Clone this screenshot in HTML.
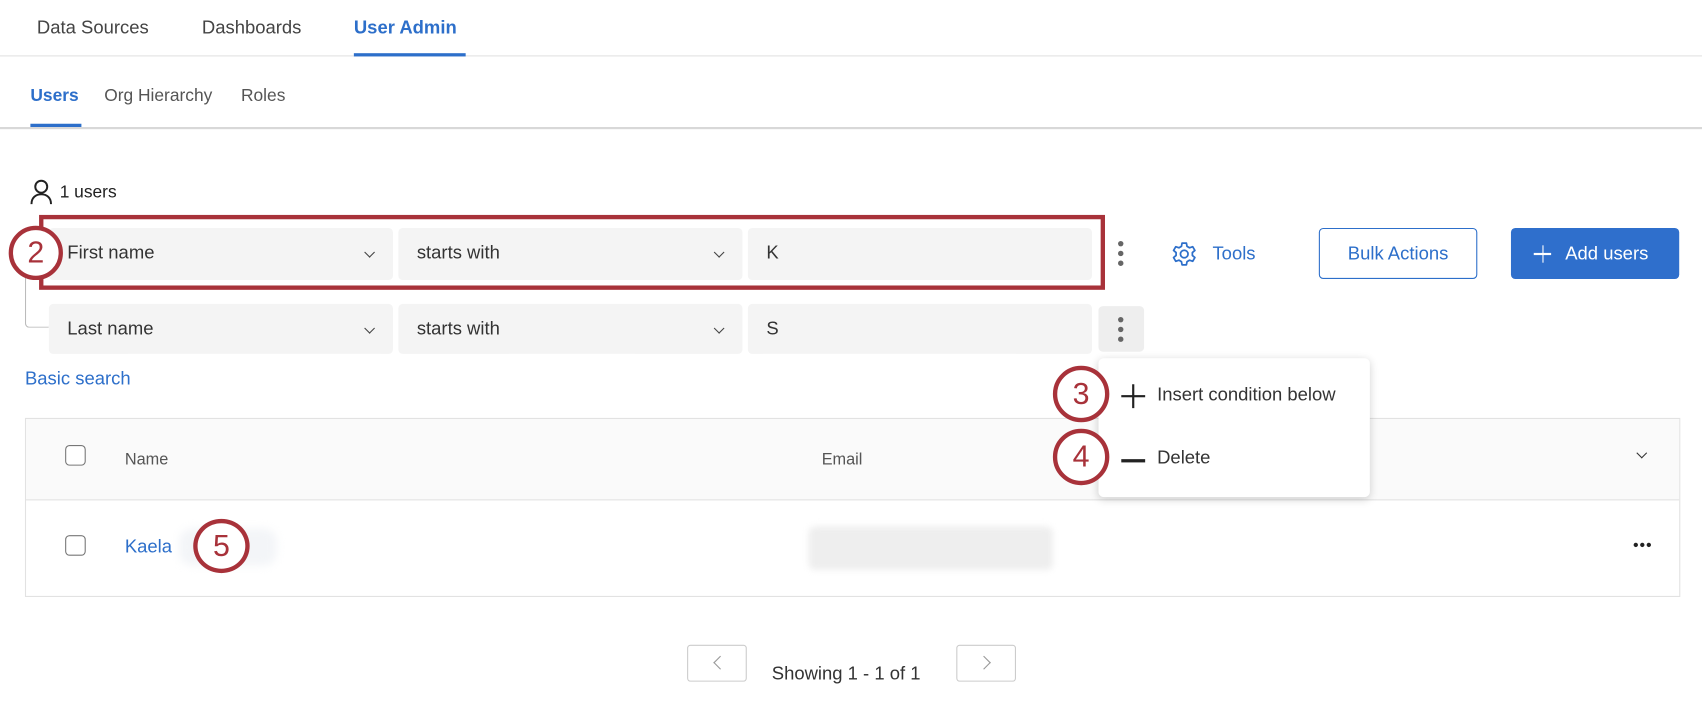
<!DOCTYPE html>
<html><head><meta charset="utf-8"><style>
*{box-sizing:border-box;margin:0;padding:0}
body{width:1702px;height:716px;overflow:hidden;background:#fff;font-family:"Liberation Sans",sans-serif;color:#333}
#w{position:absolute;left:0;top:0;width:1568px;height:660px;transform:scale(1.08546);transform-origin:0 0}
.a{position:absolute}
.t{font-size:17px;white-space:nowrap}
.sel{position:absolute;background:#f4f4f4;border-radius:4px;font-size:17px;color:#333;padding:13px 0 0 17px}
.chev{position:absolute;right:18px;top:19px;width:7px;height:7px;border-right:1.4px solid #444;border-bottom:1.4px solid #444;transform:rotate(45deg)}
.circ{position:absolute;border:4px solid #a8323a;border-radius:50%;background:#fff;color:#a8323a;font-size:28px;text-align:center;font-weight:normal}
.dot{position:absolute;width:5px;height:5px;border-radius:50%;background:#666}
.cb{position:absolute;width:19px;height:19px;border:1.5px solid #777;border-radius:4px;background:#fff}
</style></head><body><div id="w">
<div class="a t" style="left:34px;top:16px;color:#444">Data Sources</div>
<div class="a t" style="left:186px;top:16px;color:#444">Dashboards</div>
<div class="a t" style="left:326px;top:16px;color:#2d6fca;font-weight:bold">User Admin</div>
<div class="a" style="left:0;top:51px;width:1568px;height:1px;background:#e2e2e2"></div>
<div class="a" style="left:326px;top:49px;width:103px;height:3px;background:#2d6fca"></div>
<div class="a" style="left:28px;top:80px;font-size:16px;color:#2d6fca;font-weight:bold">Users</div>
<div class="a" style="left:96px;top:80px;font-size:16px;color:#555">Org Hierarchy</div>
<div class="a" style="left:222px;top:80px;font-size:16px;color:#555">Roles</div>
<div class="a" style="left:0;top:117px;width:1568px;height:2px;background:#d8d8d8"></div>
<div class="a" style="left:28px;top:114px;width:47px;height:3px;background:#2d6fca"></div>

<svg class="a" style="left:27px;top:165px" width="22" height="24" viewBox="0 0 22 24"><circle cx="11" cy="7" r="5.5" fill="none" stroke="#222" stroke-width="1.8"/><path d="M2 23c0-6 4-9 9-9s9 3 9 9" fill="none" stroke="#222" stroke-width="1.8"/></svg>
<div class="a" style="left:55px;top:169px;font-size:16px;color:#222">1 users</div>

<div class="a" style="left:23px;top:245px;width:22px;height:57px;border-left:1.5px solid #bbb;border-bottom:1.5px solid #bbb;border-bottom-left-radius:4px"></div>

<div class="sel" style="left:45px;top:210px;width:317px;height:48px">First name<div class="chev"></div></div>
<div class="sel" style="left:367px;top:210px;width:317px;height:48px">starts with<div class="chev"></div></div>
<div class="sel" style="left:689px;top:210px;width:317px;height:48px">K</div>
<div class="a" style="left:36px;top:198px;width:982px;height:69px;border:4px solid #a8323a"></div>
<div class="circ" style="left:8px;top:208px;width:50px;height:50px;line-height:42px">2</div>
<div class="dot" style="left:1030px;top:222px"></div><div class="dot" style="left:1030px;top:231px"></div><div class="dot" style="left:1030px;top:240px"></div>

<svg class="a" style="left:1079px;top:222px" width="24" height="24" viewBox="0 0 24 24"><path d="M10 2h4l.6 3 2.3 1.3 2.9-1 2 3.4-2.3 2v2.6l2.3 2-2 3.4-2.9-1-2.3 1.3-.6 3h-4l-.6-3-2.3-1.3-2.9 1-2-3.4 2.3-2v-2.6l-2.3-2 2-3.4 2.9 1L9.4 5z" fill="none" stroke="#2d6fca" stroke-width="1.6" stroke-linejoin="round"/><circle cx="12" cy="12" r="3.5" fill="none" stroke="#2d6fca" stroke-width="1.6"/></svg>
<div class="a t" style="left:1117px;top:224px;color:#2d6fca">Tools</div>
<div class="a" style="left:1215px;top:210px;width:146px;height:47px;border:1.5px solid #2d6fca;border-radius:4px;color:#2d6fca;font-size:17px;text-align:center;line-height:45px">Bulk Actions</div>
<div class="a" style="left:1392px;top:210px;width:155px;height:47px;background:#2f6fcc;border-radius:4px;color:#fff;font-size:17px;line-height:47px;padding-left:50px">Add users</div>
<div class="a" style="left:1413px;top:233px;width:16px;height:1.5px;background:#fff"></div><div class="a" style="left:1420.5px;top:226px;width:1.5px;height:16px;background:#fff"></div>

<div class="sel" style="left:45px;top:280px;width:317px;height:46px">Last name<div class="chev"></div></div>
<div class="sel" style="left:367px;top:280px;width:317px;height:46px">starts with<div class="chev"></div></div>
<div class="sel" style="left:689px;top:280px;width:317px;height:46px">S</div>
<div class="a" style="left:1012px;top:282px;width:42px;height:42px;background:#eee;border-radius:4px"></div>
<div class="dot" style="left:1030px;top:292px"></div><div class="dot" style="left:1030px;top:301px"></div><div class="dot" style="left:1030px;top:310px"></div>

<div class="a" style="left:23px;top:339px;font-size:17px;color:#2d6fca">Basic search</div>

<div class="a" style="left:23px;top:385px;width:1525px;height:165px;border:1px solid #e2e2e2"></div>
<div class="a" style="left:24px;top:386px;width:1523px;height:75px;background:#fafafa;border-bottom:1px solid #e2e2e2"></div>
<div class="cb" style="left:60px;top:410px"></div>
<div class="a" style="left:115px;top:415px;font-size:15px;color:#555">Name</div>
<div class="a" style="left:757px;top:415px;font-size:15px;color:#555">Email</div>
<div class="a" style="left:1509px;top:414px;width:7px;height:7px;border-right:1.5px solid #333;border-bottom:1.5px solid #333;transform:rotate(45deg)"></div>
<div class="cb" style="left:60px;top:493px"></div>
<div class="a t" style="left:115px;top:494px;color:#2d6fca">Kaela</div>
<div class="a" style="left:165px;top:487px;width:90px;height:34px;background:#f3f5f8;border-radius:12px;filter:blur(4px)"></div>
<div class="a" style="left:745px;top:485px;width:225px;height:40px;background:#eeeeee;border-radius:6px;filter:blur(3px)"></div>
<div class="circ" style="left:178px;top:478px;width:52px;height:50px;line-height:42px">5</div>
<div class="dot" style="left:1505px;top:500px;width:4px;height:4px;background:#222"></div><div class="dot" style="left:1511px;top:500px;width:4px;height:4px;background:#222"></div><div class="dot" style="left:1517px;top:500px;width:4px;height:4px;background:#222"></div>

<div class="a" style="left:1012px;top:330px;width:250px;height:128px;background:#fff;border-radius:5px;box-shadow:0 2px 8px rgba(0,0,0,.18)"></div>
<div class="a" style="left:1033px;top:364px;width:22px;height:2px;background:#222"></div><div class="a" style="left:1043px;top:354px;width:2px;height:22px;background:#222"></div>
<div class="a t" style="left:1066px;top:354px;color:#333">Insert condition below</div>
<div class="a" style="left:1033px;top:423px;width:22px;height:2.5px;background:#222"></div>
<div class="a t" style="left:1066px;top:412px;color:#333">Delete</div>
<div class="circ" style="left:970px;top:337px;width:52px;height:52px;line-height:44px">3</div>
<div class="circ" style="left:970px;top:395px;width:52px;height:52px;line-height:44px">4</div>

<div class="a" style="left:633px;top:594px;width:55px;height:34px;border:1.5px solid #ccc;border-radius:3px"></div>
<div class="a" style="left:659px;top:606px;width:9px;height:9px;border-left:1.5px solid #999;border-bottom:1.5px solid #999;transform:rotate(45deg)"></div>
<div class="a t" style="left:711px;top:611px;color:#333">Showing 1 - 1 of 1</div>
<div class="a" style="left:881px;top:594px;width:55px;height:34px;border:1.5px solid #ccc;border-radius:3px"></div>
<div class="a" style="left:902px;top:606px;width:9px;height:9px;border-right:1.5px solid #999;border-top:1.5px solid #999;transform:rotate(45deg)"></div>
</div></body></html>
